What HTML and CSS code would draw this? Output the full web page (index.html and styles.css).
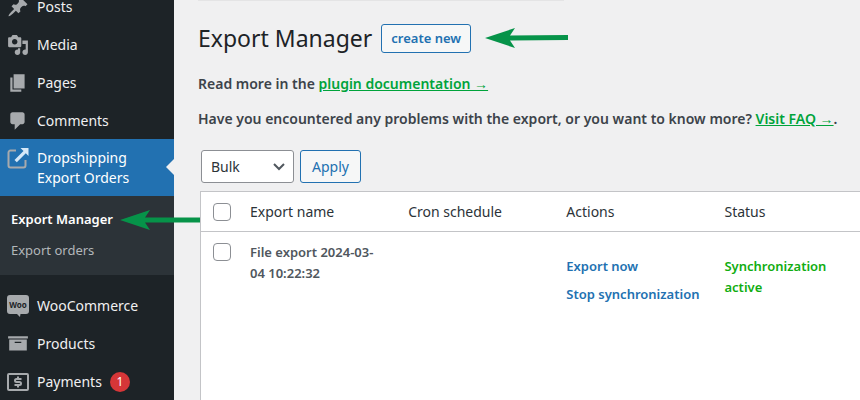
FILE: index.html
```html
<!DOCTYPE html>
<html lang="en">
<head>
    <meta charset="UTF-8">
    <meta name="viewport" content="width=device-width, initial-scale=1.0">
    <title>Export Manager</title>
    <link rel="stylesheet" href="styles.css">
</head>
<body>

    <nav class="sidebar">
        <ul class="menu">
            <li>
                <a class="menu-item" href="#">
                    <svg class="icon" viewBox="0 0 20 20"><path d="M10.44 3.02l1.82-1.82 6.36 6.35-1.83 1.82c-1.05-.68-2.48-.57-3.41.36l-.75.75c-.92.93-1.04 2.35-.35 3.41l-1.83 1.82-2.41-2.41-2.8 2.79c-.42.42-3.38 2.71-3.8 2.29s1.86-3.39 2.28-3.81l2.79-2.79L4.1 9.36l1.83-1.82c1.05.69 2.48.57 3.4-.36l.75-.75c.93-.92 1.05-2.35.36-3.41z"/></svg>
                    Posts
                </a>
            </li>
            <li>
                <a class="menu-item" href="#">
                    <svg class="icon" viewBox="0 0 20 20"><path d="M13 11V4c0-.55-.45-1-1-1h-1.67L9 1H5L3.67 3H2c-.55 0-1 .45-1 1v7c0 .55.45 1 1 1h10c.55 0 1-.45 1-1zM7 4.5c1.38 0 2.5 1.12 2.5 2.5S8.38 9.5 7 9.5 4.5 8.38 4.5 7 5.62 4.5 7 4.5zM14 6h5v10.5c0 1.38-1.12 2.5-2.5 2.5S14 17.88 14 16.5s1.12-2.5 2.5-2.5c.17 0 .34.02.5.05V9h-3V6zm-4 8.05V13h2v3.5c0 1.38-1.12 2.5-2.5 2.5S7 17.88 7 16.5 8.12 14 9.5 14c.17 0 .34.02.5.05z"/></svg>
                    Media
                </a>
            </li>
            <li>
                <a class="menu-item" href="#">
                    <svg class="icon" viewBox="0 0 20 20"><path d="M6 15V2h10v13H6zm-1 1h8v2H3V5h2v11z"/></svg>
                    Pages
                </a>
            </li>
            <li>
                <a class="menu-item" href="#">
                    <svg class="icon" viewBox="0 0 20 20"><path d="M5 2h9c1.1 0 2 .9 2 2v7c0 1.1-.9 2-2 2h-2l-5 5v-5H5c-1.1 0-2-.9-2-2V4c0-1.1.9-2 2-2z"/></svg>
                    Comments
                </a>
            </li>
            <li>
                <a class="menu-item current" href="#">
                    <svg class="icon" viewBox="0 0 22 22">
                        <path class="icon-line" d="M9 2.5H3.500a2 2 0 0 0-2 2v13a2 2 0 0 0 2 2h13a2 2 0 0 0 2-2V12"/>
                        <path class="icon-arrow" d="M21.500 0v8l-2.700-2.700-9 9-2.300-2.300 9-9L13.500 0z"/>
                    </svg>
                    Dropshipping Export Orders
                </a>
                <ul class="submenu">
                    <li><a class="active" href="#">Export Manager</a></li>
                    <li><a href="#">Export orders</a></li>
                </ul>
            </li>
            <li>
                <a class="menu-item" href="#">
                    <svg class="icon" viewBox="0 0 22 22">
                        <path d="M3 0h16a3 3 0 0 1 3 3v13a3 3 0 0 1-3 3h-5.500l-.5 3-3-3H3a3 3 0 0 1-3-3V3a3 3 0 0 1 3-3z"/>
                        <text class="woo" x="11" y="13" text-anchor="middle">Woo</text>
                    </svg>
                    WooCommerce
                </a>
            </li>
            <li>
                <a class="menu-item" href="#">
                    <svg class="icon" viewBox="0 0 20 20"><path d="M19 3v2H1V3h18zM2 6h16v10H2V6zm11 3V8H7v1h6z"/></svg>
                    Products
                </a>
            </li>
            <li>
                <a class="menu-item" href="#">
                    <svg class="icon" viewBox="0 0 22 22">
                        <rect class="icon-line" x="1" y="3" width="20" height="16" rx="1"/>
                        <path class="icon-line" d="M14.500 8H9.500Q8 8 8 9.500T9.500 11h3q1.500 0 1.500 1.500T12.500 14H7.500M11 5.500V8M11 14v2.500"/>
                    </svg>
                    Payments
                    <span class="count">1</span>
                </a>
            </li>
        </ul>
        <svg class="arrow arrow-menu" viewBox="0 0 80 20"><path d="M0 10L30 0 25 7.500H80V12.500H25L30 20z"/></svg>
    </nav>

    <main class="content">
        <div class="notice-end"></div>

        <header class="page-head">
            <h1>Export Manager</h1>
            <button class="button button-small" type="button">create new</button>
            <svg class="arrow" viewBox="0 0 83 20"><path d="M0 10L30 0 25 7.500 83 7V12L25 12.500 30 20z"/></svg>
        </header>

        <p class="info">Read more in the <a href="#">plugin documentation →</a></p>
        <p class="info">Have you encountered any problems with the export, or you want to know more? <a href="#">Visit FAQ →</a>.</p>

        <form class="bulk">
            <div class="select-wrap">
                <select aria-label="Bulk actions">
                    <option>Bulk</option>
                </select>
                <svg class="chevron" viewBox="0 0 12 8"><path d="M1 1l5 5 5-5"/></svg>
            </div>
            <button class="button" type="button">Apply</button>
        </form>

        <div class="table-wrap">
            <table>
                <thead>
                    <tr>
                        <th class="check"><input type="checkbox" aria-label="Select all"></th>
                        <th class="col">Export name</th>
                        <th class="col">Cron schedule</th>
                        <th class="col">Actions</th>
                        <th>Status</th>
                    </tr>
                </thead>
                <tbody>
                    <tr>
                        <td class="check"><input type="checkbox" aria-label="Select File export"></td>
                        <td class="name">File export 2024-03-04 10:22:32</td>
                        <td></td>
                        <td class="actions">
                            <a href="#">Export now</a>
                            <a href="#">Stop synchronization</a>
                        </td>
                        <td class="status">Synchronization active</td>
                    </tr>
                </tbody>
            </table>
        </div>
    </main>

</body>
</html>
```
FILE: styles.css
```css
* {
    box-sizing: border-box;
}

body {
    margin: 0;
    display: flex;
    min-height: 100vh;
    overflow: hidden;
    background: #f0f0f1;
    color: #2c3338;
    font-family: 'Noto Sans', 'Open Sans', sans-serif;
    font-size: 14px;
    line-height: 20px;
}

ul {
    list-style: none;
    margin: 0;
    padding: 0;
}

/* sidebar */
.sidebar {
    position: relative;
    flex: none;
    width: 174px;
    background: #1d2327;
}

.menu {
    margin-top: -12px;
    margin-bottom: -13px;
}

.menu-item {
    display: flex;
    align-items: center;
    gap: 8px;
    min-height: 38px;
    padding: 0 7px;
    color: #f0f0f1;
    text-decoration: none;
}

.icon {
    flex: none;
    width: 22px;
    height: 22px;
    fill: #a7aaad;
}

.icon-line {
    fill: none;
    stroke: #a7aaad;
    stroke-width: 2;
}

.icon-arrow {
    fill: #d5e8f8;
}

.woo {
    fill: #1d2327;
    font-size: 8px;
    font-weight: 700;
}

.current {
    position: relative;
    align-items: flex-start;
    margin-top: -1px;
    padding-top: 9px;
    padding-bottom: 8px;
    background: #2271b1;
    color: #fff;
}

.current::after {
    content: "";
    position: absolute;
    right: 0;
    top: 20px;
    border: 8px solid transparent;
    border-left-width: 0;
    border-right-color: #f0f0f1;
}

.submenu {
    margin-bottom: 12px;
    padding: 7px 11px 10px;
    background: #2c3338;
    font-size: 13px;
}

.submenu a {
    display: block;
    padding: 6px 0 5px;
    color: #b3b7ba;
    text-decoration: none;
}

.submenu .active {
    color: #fff;
    font-weight: 600;
}

.count {
    width: 20px;
    height: 20px;
    border-radius: 50%;
    background: #d63638;
    color: #fff;
    font-size: 12px;
    text-align: center;
}

/* green pointers */
.arrow {
    width: 83px;
    height: 20px;
    fill: #069349;
}

.arrow-menu {
    position: absolute;
    left: 120px;
    top: 210px;
    width: 80px;
}

/* content */
.content {
    flex: 1;
    min-width: 0;
    display: flex;
    flex-direction: column;
    padding-left: 24px;
}

.notice-end {
    width: 366px;
    height: 1px;
    background: #e4e4e5;
}

.page-head {
    display: flex;
    align-items: center;
    margin: 19px 0 18px;
}

h1 {
    margin: 0 9px 0 0;
    color: #1d2327;
    font-size: 23px;
    font-weight: 400;
    line-height: 36px;
}

.page-head .arrow {
    margin-left: 14px;
}

.info {
    margin: 0 0 15px;
    color: #3c434a;
    font-size: 14px;
    font-weight: 600;
}

.info a {
    color: #00a33b;
}

.button {
    height: 33px;
    padding: 0 11px;
    border: 1px solid #2271b1;
    border-radius: 3px;
    background: #f6f7f7;
    color: #2271b1;
    font: inherit;
    cursor: pointer;
}

.button-small {
    height: 29px;
    padding: 0 9px;
    font-size: 13px;
    font-weight: 600;
}

.bulk {
    display: flex;
    gap: 6px;
    margin: 6px 0 8px 3px;
}

.select-wrap {
    position: relative;
}

select {
    appearance: none;
    width: 93px;
    height: 33px;
    padding: 0 9px;
    border: 1px solid #8c8f94;
    border-radius: 3px;
    background: #fff;
    color: #2c3338;
    font: inherit;
}

.chevron {
    position: absolute;
    right: 9px;
    top: 13px;
    width: 12px;
    height: 8px;
    fill: none;
    stroke: #50575e;
    stroke-width: 2;
    pointer-events: none;
}

/* exports table */
.table-wrap {
    flex: 1;
    margin-left: 2px;
    border: 1px solid #c3c4c7;
    border-width: 1px 0 0 1px;
    background: #fff;
}

table {
    width: 100%;
    table-layout: fixed;
    border-collapse: collapse;
}

th,
td {
    padding: 10px 8px;
    text-align: left;
    vertical-align: top;
}

th {
    padding: 10px 8px 9px;
    border-bottom: 1px solid #c3c4c7;
    font-weight: 400;
}

.check {
    width: 41px;
    padding-left: 12px;
    padding-right: 0;
}

.col {
    width: 24%;
}

td {
    font-size: 13px;
    font-weight: 600;
    line-height: 21px;
}

input[type="checkbox"] {
    appearance: none;
    display: block;
    width: 18px;
    height: 18px;
    margin: 1px 0;
    border: 1px solid #8c8f94;
    border-radius: 4px;
    background: #fff;
}

.name {
    padding-right: 16px;
    color: #50575e;
}

.actions,
.status {
    padding-top: 24px;
}

.actions a {
    display: block;
    margin-bottom: 7px;
    color: #2271b1;
    text-decoration: none;
    white-space: nowrap;
}

.status {
    color: #11ad11;
}
```
